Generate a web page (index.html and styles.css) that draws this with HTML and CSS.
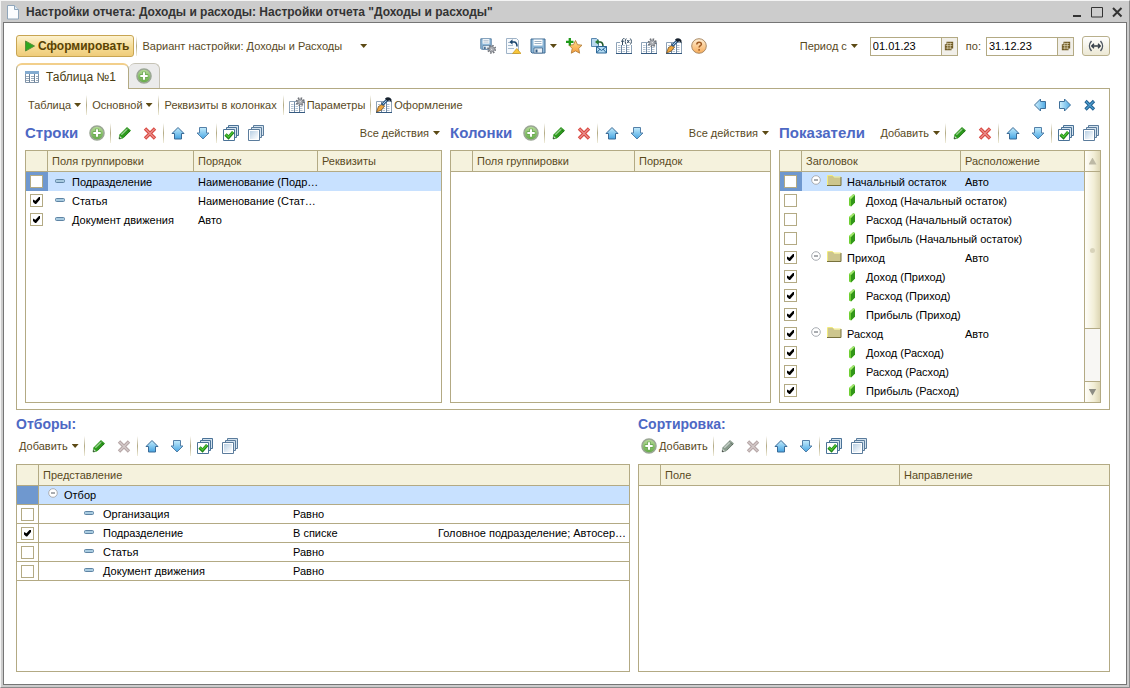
FILE: index.html
```html
<!DOCTYPE html>
<html lang="ru">
<head>
<meta charset="utf-8">
<meta name="viewport" content="width=device-width, initial-scale=1">
<title>Настройки отчета: Доходы и расходы</title>
<link rel="stylesheet" href="styles.css">
</head>
<body>
<svg class="sprite" aria-hidden="true">
  <defs>
    <linearGradient id="g-blue" x1="0" y1="0" x2="0" y2="1"><stop offset="0" stop-color="#c4ecfc"/><stop offset="1" stop-color="#45a4e2"/></linearGradient>
    <linearGradient id="g-blue-r" x1="0" y1="0" x2="1" y2="0"><stop offset="0" stop-color="#d0f0fd"/><stop offset="1" stop-color="#50aae4"/></linearGradient>
    <linearGradient id="g-green" x1="0" y1="0" x2="0" y2="1"><stop offset="0" stop-color="#b9dc9c"/><stop offset="1" stop-color="#62ab45"/></linearGradient>
    <linearGradient id="g-help" x1="0" y1="0" x2="0" y2="1"><stop offset="0" stop-color="#fff0d6"/><stop offset="1" stop-color="#f7ab58"/></linearGradient>
    <linearGradient id="g-page" x1="0" y1="0" x2="1" y2="1"><stop offset="0" stop-color="#b9d0e4"/><stop offset="1" stop-color="#fff"/></linearGradient>
    <linearGradient id="g-star" x1="0" y1="0" x2="0" y2="1"><stop offset="0" stop-color="#ffe08a"/><stop offset="1" stop-color="#f59a3c"/></linearGradient>
  </defs>
  <symbol id="i-doc" viewBox="0 0 16 16"><path d="M2.500 1.500h7l4 4v9.500h-11z" fill="#fbfdff" stroke="#8fa6bb"/><path d="M9.500 1.500v4h4" fill="#dce8f2" stroke="#8fa6bb"/></symbol>
  <symbol id="i-play" viewBox="0 0 10 12"><path d="M.500 1l9 5-9 5z" fill="#2ea820" stroke="#5a8c3c"/></symbol>
  <symbol id="i-plus" viewBox="0 0 16 16"><circle cx="8" cy="8" r="7" fill="url(#g-green)" stroke="#9aa694" stroke-width="1.600"/><path d="M8 3.800v8.400M3.800 8h8.400" stroke="#64a34c" stroke-width="3.600"/><path d="M8 4.300v7.400M4.300 8h7.400" stroke="#fff" stroke-width="2.200"/></symbol>
  <symbol id="i-pencil" viewBox="0 0 16 16"><path d="M2 14l.500-4.500 7.500-7.500 4 3.500-7.500 7.500z" fill="currentColor"/><path d="M4.300 9.700l6.200-6" stroke="#fff" stroke-opacity=".5" stroke-width="1.400"/><path d="M7 12l6-6" stroke="#000" stroke-opacity=".25"/><path d="M9 3.300l3.800 3.600" stroke="#000" stroke-opacity=".25"/><path d="M2.600 10.500l2.900 2.800-3.500.700z" fill="#e8efe4" stroke="currentColor" stroke-width=".6"/><path d="M2 14l.500-2 1.500 1.600z" fill="#333"/></symbol>
  <symbol id="i-cross" viewBox="0 0 16 16"><path d="M3 3.500l10 10M13 3.500l-10 10" stroke="currentColor" stroke-width="3.400"/><path d="M3.500 4l9 9M12.500 4l-9 9" stroke="#fff" stroke-opacity=".4" stroke-width="1.400"/></symbol>
  <symbol id="i-up" viewBox="0 0 16 16"><path d="M8 2.500l6 6h-2.500v5.500h-7V8.500H2z" fill="url(#g-blue)" stroke="#3a6a96"/></symbol>
  <symbol id="i-down" viewBox="0 0 16 16"><path d="M8 14l6-6h-2.500V2.500h-7V8H2z" fill="url(#g-blue)" stroke="#5480a8"/></symbol>
  <symbol id="i-left" viewBox="0 0 16 16"><path d="M2.500 8l6-6v2.500h5v7h-5V14z" fill="url(#g-blue-r)" stroke="#3f709a"/></symbol>
  <symbol id="i-right" viewBox="0 0 16 16"><path d="M13.500 8l-6-6v2.500h-5v7h5V14z" fill="url(#g-blue-r)" stroke="#3f709a"/></symbol>
  <symbol id="i-close" viewBox="0 0 16 16"><path d="M3.500 4l8.500 8.500M12 4l-8.500 8.500" stroke="#235f8f" stroke-width="3.200"/><path d="M4 4.500l7.500 7.500M11.500 4.500L4 12" stroke="#4c9ccd" stroke-width="1.300"/></symbol>
  <symbol id="i-stack" viewBox="0 0 16 16"><path d="M5.500.500h10v10h-10z" fill="#d3e2ee" stroke="#5b7c9c"/><path d="M3.500 2.500h10v10h-10z" fill="#d3e2ee" stroke="#5b7c9c"/><path d="M.500 4.500h11v11H.500z" fill="#fff" stroke="#5b7c9c"/><path d="M2 6h8v8H2z" fill="url(#g-page)"/></symbol>
  <symbol id="i-checkall" viewBox="0 0 16 16"><path d="M5.500.500h10v10h-10z" fill="#d3e2ee" stroke="#4a7297"/><path d="M3.500 2.500h10v10h-10z" fill="#d3e2ee" stroke="#4a7297"/><path d="M.500 4.500h11v11H.500z" fill="#fff" stroke="#4a7297"/><path d="M2.500 9.500l3 3 4.700-5.500" fill="none" stroke="#1d8217" stroke-width="3.200"/><path d="M2.800 9.500l2.700 2.500 4.400-5" fill="none" stroke="#4bc332" stroke-width="1.500"/></symbol>
  <symbol id="i-table" viewBox="0 0 16 16"><path d="M1.500 2.500h13v11h-13z" fill="#fff" stroke="#7f93a8"/><path d="M1 2h14v3H1z" fill="#83abd0"/><path d="M5.500 5v8M10.500 5v8" stroke="#6c8299"/><path d="M2 7.500h12M2 9.500h12M2 11.500h12" stroke="#9aaaba" stroke-dasharray="3 2"/></symbol>
  <symbol id="i-grid" viewBox="0 0 16 16"><path d="M.500 4.500h15v11H.500z" fill="#fff" stroke="#8ea3b8"/><path d="M5.500 5v10M10.500 5v10" stroke="#6f89a5"/><path d="M2 7.500h12M2 9.500h12M2 11.500h12M2 13.500h12" stroke="#b4c2d0" stroke-dasharray="2.500 2"/><path d="M0 15.500h16" stroke="#355a80"/></symbol>
  <symbol id="i-gear" viewBox="0 0 16 16"><circle cx="8" cy="8" r="6" fill="none" stroke="#73767c" stroke-width="3.500" stroke-dasharray="2.400 2.310"/><circle cx="8" cy="8" r="4.500" fill="#b9bcc1" stroke="#7c7f86" stroke-width="1.500"/><circle cx="8" cy="8" r="1.800" fill="#fff" stroke="#7c7f86"/></symbol>
  <symbol id="i-params" viewBox="0 0 16 16"><use href="#i-grid"/><use href="#i-gear" x="6.500" y="0" width="9.500" height="9.500"/></symbol>
  <symbol id="i-style" viewBox="0 0 16 16"><use href="#i-grid"/><path d="M.500 15l2-5.500 4-2.500 2 2-3 4z" fill="#f0a73c" stroke="#71522a" stroke-width=".8"/><path d="M6 8l6-6" stroke="#355f88" stroke-width="3"/><path d="M7 7l5-5" stroke="#a9cde8"/><path d="M9 1.500c2-1.800 5-1.800 6.500 1v3c-1.500-2.500-3-2-4.500-1.500z" fill="#17222e"/></symbol>
  <symbol id="i-fx" viewBox="0 0 16 16"><use href="#i-grid"/><path d="M4 0h12v7H4z" fill="#fff"/><path d="M8.500.700c-2-.700-2 1-2 2v4.300M5 3.200h3M10.300.500c-1.500 2-1.500 4 0 6M11.300 2l2 3M13.300 2l-2 3M14.300.500c1.500 2 1.500 4 0 6" fill="none" stroke="#334b61"/></symbol>
  <symbol id="i-disk" viewBox="0 0 16 16"><path d="M1 1h14v14H2l-1-1z" fill="#8db7d8" stroke="#3f6a92"/><path d="M3.500 1.500h9v6h-9z" fill="#fff"/><path d="M4.500 3.500h7M4.500 5.500h7" stroke="#9db2c6"/><path d="M4 10h8.500v5H4z" fill="#eaf1f7" stroke="#365f87" stroke-width=".7"/><path d="M5.500 11.500h2v3h-2z" fill="#365f87"/></symbol>
  <symbol id="i-diskgear" viewBox="0 0 16 16"><use href="#i-disk" x="0" y="0" width="12" height="12"/><use href="#i-gear" x="7" y="6.500" width="9.500" height="9.500"/></symbol>
  <symbol id="i-restore" viewBox="0 0 16 16"><path d="M1.500.500h10l2 2v13h-12z" fill="#f7fafd" stroke="#9fb3c7"/><path d="M3 4.500h3M3 7.500h5M3 10.500h6" stroke="#a7bccf"/><path d="M6 4h3.500c2 .5 2.500 2 2.500 4.500" fill="none" stroke="#17436c" stroke-width="1.500"/><path d="M7.500 1.200v5.600L4.500 4z" fill="#17436c"/><path d="M7.500 15.500l4.300-5 4.200 5z" fill="#f8c63b" stroke="#c59418" stroke-width=".7"/></symbol>
  <symbol id="i-fav" viewBox="0 0 16 16"><path d="M9.500 2.500l2 4.200 4.500.500-3.300 3.200.900 4.800-4.100-2.300-4.200 2.300.900-4.800L3 7.200l4.500-.500z" fill="url(#g-star)" stroke="#b5803c" stroke-width=".9"/><path d="M3.800 0v7.500M0 3.800h7.500" stroke="#1f9a1a" stroke-width="2.300"/></symbol>
  <symbol id="i-mail" viewBox="0 0 16 16"><path d="M.500.500h5l2 2v6h-7z" fill="#b9d8ee" stroke="#5a88b0"/><path d="M5.500 4h4c2 .5 2.500 2 2.500 4" fill="none" stroke="#235c2c" stroke-width="1.500"/><path d="M7.500 1.200v5.600L4 4z" fill="#287b32"/><path d="M5.500 8.500h10v6.500h-10z" fill="#b4dbf3" stroke="#2d6796"/><path d="M5.500 8.500l5 4 5-4M5.500 15l3.500-4M15.500 15L12 11" fill="none" stroke="#2d6796"/></symbol>
  <symbol id="i-help" viewBox="0 0 16 16"><circle cx="8" cy="8" r="7.300" fill="url(#g-help)" stroke="#aa8a66"/><path d="M5.800 6.500c0-3 4.600-3 4.600-.300 0 1.500-2.300 1.500-2.300 3.300M8.100 11v1.700" fill="none" stroke="#a05a22" stroke-width="1.500"/></symbol>
  <symbol id="i-cal" viewBox="0 0 12 12"><path d="M3 1h8v8H9v2H1V4h2z" fill="#6f5a24"/><path d="M4 3h6M2 5.500h8M2 8.500h7M4.500 2v8M7.500 2v8" stroke="#e8dfc0" stroke-width=".8"/></symbol>
  <symbol id="i-range" viewBox="0 0 16 12"><path d="M3.500 1C.800 4 .800 8 3.500 11M12.500 1c2.700 3 2.700 7 0 10" fill="none" stroke="#4c5560" stroke-width="1.400"/><path d="M4 6h8M6 3.800L3.700 6 6 8.200M10 3.800L12.300 6 10 8.200" fill="none" stroke="#333c46" stroke-width="1.300"/></symbol>
  <symbol id="i-dash" viewBox="0 0 12 16"><rect x="1.500" y="5.500" width="9" height="3" rx="1" fill="#a9cbe0" stroke="#5e84a4"/></symbol>
  <symbol id="i-minus" viewBox="0 0 10 16"><circle cx="5" cy="6" r="4.300" fill="#fff" stroke="#a9adb3"/><path d="M3 6h4" stroke="#555b63"/></symbol>
  <symbol id="i-folder" viewBox="0 0 16 16"><path d="M1 2h6l1.500 1.500H15V11H1z" fill="#cdc68e"/><path d="M1.500 11V1.500h5L8 3h7" fill="none" stroke="#f2eb7c"/><path d="M15 3v8.500H1" fill="none" stroke="#77713c"/></symbol>
  <symbol id="i-leaf" viewBox="0 0 8 16"><path d="M1 5l4-3.500 2 .500v7.500l-4 4-2-1z" fill="#6fd032"/><path d="M5 1.500l2 .500v7.500l-4 4V6z" fill="#33961a"/><path d="M1 5l4-3.500 2 .500-4 4z" fill="#a5e96f"/></symbol>
</svg>

<div class="window">
  <header class="titlebar">
    <svg class="icon"><use href="#i-doc"/></svg>
    <h1 class="titlebar-text">Настройки отчета: Доходы и расходы: Настройки отчета "Доходы и расходы"</h1>
    <div class="window-controls">
      <button class="bare" aria-label="Свернуть"><svg class="wc" viewBox="0 0 12 12"><path d="M2 10h8" stroke="#333" stroke-width="2"/></svg></button>
      <button class="bare" aria-label="Развернуть"><svg class="wc" viewBox="0 0 12 12"><path d="M.500 1.500h11v9.500H.500z" fill="none" stroke="#333"/></svg></button>
      <button class="bare" aria-label="Закрыть"><svg class="wc" viewBox="0 0 12 12"><path d="M2 2l8.500 8.500M10.500 2L2 10.500" stroke="#333" stroke-width="2"/></svg></button>
    </div>
  </header>

  <main class="content">
    <div class="mainbar">
      <div class="mainbar-left">
        <button class="run"><svg class="play"><use href="#i-play"/></svg>Сформировать</button>
        <span class="sep"></span>
        <button class="bare variant"><span>Вариант настройки: Доходы и Расходы</span><span class="caret"></span></button>
      </div>
      <div class="icons">
        <button class="bare" aria-label="Настройки сохранения"><svg class="icon"><use href="#i-diskgear"/></svg></button>
        <button class="bare" aria-label="Восстановить настройки"><svg class="icon"><use href="#i-restore"/></svg></button>
        <button class="bare menu" aria-label="Сохранить"><svg class="icon"><use href="#i-disk"/></svg><span class="caret"></span></button>
        <button class="bare" aria-label="В избранное"><svg class="icon"><use href="#i-fav"/></svg></button>
        <button class="bare" aria-label="Отправить"><svg class="icon"><use href="#i-mail"/></svg></button>
        <button class="bare" aria-label="Формулы"><svg class="icon"><use href="#i-fx"/></svg></button>
        <button class="bare" aria-label="Параметры таблицы"><svg class="icon"><use href="#i-params"/></svg></button>
        <button class="bare" aria-label="Оформление таблицы"><svg class="icon"><use href="#i-style"/></svg></button>
        <button class="bare" aria-label="Справка"><svg class="icon"><use href="#i-help"/></svg></button>
      </div>
      <div class="period">
        <button class="bare menu">Период с<span class="caret"></span></button>
        <div class="date"><input type="text" value="01.01.23" aria-label="Период с"><button aria-label="Выбрать дату начала"><svg class="cal"><use href="#i-cal"/></svg></button></div>
        <label for="date-to">по:</label>
        <div class="date"><input type="text" id="date-to" value="31.12.23"><button aria-label="Выбрать дату окончания"><svg class="cal"><use href="#i-cal"/></svg></button></div>
        <button class="range" aria-label="Выбрать период"><svg><use href="#i-range"/></svg></button>
      </div>
    </div>

    <div class="tabs">
      <button class="tab tab-active"><svg class="icon"><use href="#i-table"/></svg>Таблица №1</button>
      <button class="tab tab-add" aria-label="Добавить таблицу"><svg class="icon"><use href="#i-plus"/></svg></button>
    </div>

    <section class="panel">
      <div class="commands">
        <button class="bare menu">Таблица<span class="caret"></span></button>
        <span class="sep"></span>
        <button class="bare menu">Основной<span class="caret"></span></button>
        <span class="sep"></span>
        <button class="bare wide">Реквизиты в колонках</button>
        <span class="sep"></span>
        <button class="bare labelled"><svg class="icon"><use href="#i-params"/></svg>Параметры</button>
        <span class="sep"></span>
        <button class="bare labelled"><svg class="icon"><use href="#i-style"/></svg>Оформление</button>
        <div class="icons push">
          <button class="bare" aria-label="Влево"><svg class="icon"><use href="#i-left"/></svg></button>
          <button class="bare" aria-label="Вправо"><svg class="icon"><use href="#i-right"/></svg></button>
          <button class="bare" aria-label="Удалить таблицу"><svg class="icon"><use href="#i-close"/></svg></button>
        </div>
      </div>

      <div class="columns">
        <section class="block">
          <div class="block-head">
            <h2>Строки</h2>
            <div class="icons">
              <button class="bare" aria-label="Добавить"><svg class="icon"><use href="#i-plus"/></svg></button>
              <span class="sep"></span>
              <button class="bare" aria-label="Изменить"><svg class="icon green"><use href="#i-pencil"/></svg></button>
              <button class="bare" aria-label="Удалить"><svg class="icon red"><use href="#i-cross"/></svg></button>
              <span class="sep"></span>
              <button class="bare" aria-label="Вверх"><svg class="icon"><use href="#i-up"/></svg></button>
              <button class="bare" aria-label="Вниз"><svg class="icon"><use href="#i-down"/></svg></button>
              <span class="sep"></span>
              <button class="bare" aria-label="Отметить все"><svg class="icon"><use href="#i-checkall"/></svg></button>
              <button class="bare" aria-label="Снять отметки"><svg class="icon"><use href="#i-stack"/></svg></button>
            </div>
            <button class="bare menu push">Все действия<span class="caret"></span></button>
          </div>
          <div class="grid">
            <table>
              <colgroup><col class="c-check"><col class="c-rows-field"><col class="c-rows-order"><col></colgroup>
              <thead><tr><th></th><th>Поля группировки</th><th>Порядок</th><th>Реквизиты</th></tr></thead>
              <tbody>
                <tr class="selected"><td><input type="checkbox" aria-label="Подразделение"></td><td><div class="node field"><svg class="dash"><use href="#i-dash"/></svg>Подразделение</div></td><td>Наименование (Подр…</td><td></td></tr>
                <tr><td><input type="checkbox" checked aria-label="Статья"></td><td><div class="node field"><svg class="dash"><use href="#i-dash"/></svg>Статья</div></td><td>Наименование (Стат…</td><td></td></tr>
                <tr><td><input type="checkbox" checked aria-label="Документ движения"></td><td><div class="node field"><svg class="dash"><use href="#i-dash"/></svg>Документ движения</div></td><td>Авто</td><td></td></tr>
              </tbody>
            </table>
          </div>
        </section>

        <section class="block">
          <div class="block-head">
            <h2>Колонки</h2>
            <div class="icons">
              <button class="bare" aria-label="Добавить"><svg class="icon"><use href="#i-plus"/></svg></button>
              <span class="sep"></span>
              <button class="bare" aria-label="Изменить"><svg class="icon green"><use href="#i-pencil"/></svg></button>
              <button class="bare" aria-label="Удалить"><svg class="icon red"><use href="#i-cross"/></svg></button>
              <span class="sep"></span>
              <button class="bare" aria-label="Вверх"><svg class="icon"><use href="#i-up"/></svg></button>
              <button class="bare" aria-label="Вниз"><svg class="icon"><use href="#i-down"/></svg></button>
            </div>
            <button class="bare menu push">Все действия<span class="caret"></span></button>
          </div>
          <div class="grid">
            <table>
              <colgroup><col class="c-check"><col class="c-cols-field"><col></colgroup>
              <thead><tr><th></th><th>Поля группировки</th><th>Порядок</th></tr></thead>
            </table>
          </div>
        </section>

        <section class="block">
          <div class="block-head">
            <h2>Показатели</h2>
            <div class="icons push">
              <button class="bare menu">Добавить<span class="caret"></span></button>
              <span class="sep"></span>
              <button class="bare" aria-label="Изменить"><svg class="icon green"><use href="#i-pencil"/></svg></button>
              <button class="bare" aria-label="Удалить"><svg class="icon red"><use href="#i-cross"/></svg></button>
              <span class="sep"></span>
              <button class="bare" aria-label="Вверх"><svg class="icon"><use href="#i-up"/></svg></button>
              <button class="bare" aria-label="Вниз"><svg class="icon"><use href="#i-down"/></svg></button>
              <span class="sep"></span>
              <button class="bare" aria-label="Отметить все"><svg class="icon"><use href="#i-checkall"/></svg></button>
              <button class="bare" aria-label="Снять отметки"><svg class="icon"><use href="#i-stack"/></svg></button>
            </div>
          </div>
          <div class="grid grid-scroll">
            <table>
              <colgroup><col class="c-check"><col class="c-ind-title"><col></colgroup>
              <thead><tr><th></th><th>Заголовок</th><th>Расположение</th></tr></thead>
              <tbody>
                <tr class="selected"><td><input type="checkbox" aria-label="Начальный остаток"></td><td><div class="node group"><svg class="minus"><use href="#i-minus"/></svg><svg class="icon"><use href="#i-folder"/></svg>Начальный остаток</div></td><td>Авто</td></tr>
                <tr><td><input type="checkbox" aria-label="Доход (Начальный остаток)"></td><td colspan="2"><div class="node leaf"><svg class="cube"><use href="#i-leaf"/></svg>Доход (Начальный остаток)</div></td></tr>
                <tr><td><input type="checkbox" aria-label="Расход (Начальный остаток)"></td><td colspan="2"><div class="node leaf"><svg class="cube"><use href="#i-leaf"/></svg>Расход (Начальный остаток)</div></td></tr>
                <tr><td><input type="checkbox" aria-label="Прибыль (Начальный остаток)"></td><td colspan="2"><div class="node leaf"><svg class="cube"><use href="#i-leaf"/></svg>Прибыль (Начальный остаток)</div></td></tr>
                <tr><td><input type="checkbox" checked aria-label="Приход"></td><td><div class="node group"><svg class="minus"><use href="#i-minus"/></svg><svg class="icon"><use href="#i-folder"/></svg>Приход</div></td><td>Авто</td></tr>
                <tr><td><input type="checkbox" checked aria-label="Доход (Приход)"></td><td colspan="2"><div class="node leaf"><svg class="cube"><use href="#i-leaf"/></svg>Доход (Приход)</div></td></tr>
                <tr><td><input type="checkbox" checked aria-label="Расход (Приход)"></td><td colspan="2"><div class="node leaf"><svg class="cube"><use href="#i-leaf"/></svg>Расход (Приход)</div></td></tr>
                <tr><td><input type="checkbox" checked aria-label="Прибыль (Приход)"></td><td colspan="2"><div class="node leaf"><svg class="cube"><use href="#i-leaf"/></svg>Прибыль (Приход)</div></td></tr>
                <tr><td><input type="checkbox" checked aria-label="Расход"></td><td><div class="node group"><svg class="minus"><use href="#i-minus"/></svg><svg class="icon"><use href="#i-folder"/></svg>Расход</div></td><td>Авто</td></tr>
                <tr><td><input type="checkbox" checked aria-label="Доход (Расход)"></td><td colspan="2"><div class="node leaf"><svg class="cube"><use href="#i-leaf"/></svg>Доход (Расход)</div></td></tr>
                <tr><td><input type="checkbox" checked aria-label="Расход (Расход)"></td><td colspan="2"><div class="node leaf"><svg class="cube"><use href="#i-leaf"/></svg>Расход (Расход)</div></td></tr>
                <tr><td><input type="checkbox" checked aria-label="Прибыль (Расход)"></td><td colspan="2"><div class="node leaf"><svg class="cube"><use href="#i-leaf"/></svg>Прибыль (Расход)</div></td></tr>
              </tbody>
            </table>
            <div class="scrollbar">
              <button class="scroll-btn scroll-up" aria-label="Прокрутить вверх"></button>
              <div class="scroll-thumb"></div>
              <div class="scroll-track"></div>
              <button class="scroll-btn scroll-down" aria-label="Прокрутить вниз"></button>
            </div>
          </div>
        </section>
      </div>
    </section>

    <div class="lower">
      <section class="block">
        <h2>Отборы:</h2>
        <div class="icons lower-bar">
          <button class="bare menu">Добавить<span class="caret"></span></button>
          <span class="sep"></span>
          <button class="bare" aria-label="Изменить"><svg class="icon green"><use href="#i-pencil"/></svg></button>
          <button class="bare" aria-label="Удалить" disabled><svg class="icon off-red"><use href="#i-cross"/></svg></button>
          <span class="sep"></span>
          <button class="bare" aria-label="Вверх"><svg class="icon"><use href="#i-up"/></svg></button>
          <button class="bare" aria-label="Вниз"><svg class="icon"><use href="#i-down"/></svg></button>
          <span class="sep"></span>
          <button class="bare" aria-label="Отметить все"><svg class="icon"><use href="#i-checkall"/></svg></button>
          <button class="bare" aria-label="Снять отметки"><svg class="icon"><use href="#i-stack"/></svg></button>
        </div>
        <div class="grid">
          <table class="lined">
            <colgroup><col class="c-check"><col class="c-flt-name"><col class="c-flt-cond"><col></colgroup>
            <thead><tr><th></th><th colspan="3">Представление</th></tr></thead>
            <tbody>
              <tr class="selected"><td></td><td colspan="3"><div class="node root"><svg class="minus"><use href="#i-minus"/></svg>Отбор</div></td></tr>
              <tr><td><input type="checkbox" aria-label="Организация"></td><td><div class="node filter"><svg class="dash"><use href="#i-dash"/></svg>Организация</div></td><td>Равно</td><td></td></tr>
              <tr><td><input type="checkbox" checked aria-label="Подразделение"></td><td><div class="node filter"><svg class="dash"><use href="#i-dash"/></svg>Подразделение</div></td><td>В списке</td><td>Головное подразделение; Автосер…</td></tr>
              <tr><td><input type="checkbox" aria-label="Статья"></td><td><div class="node filter"><svg class="dash"><use href="#i-dash"/></svg>Статья</div></td><td>Равно</td><td></td></tr>
              <tr><td><input type="checkbox" aria-label="Документ движения"></td><td><div class="node filter"><svg class="dash"><use href="#i-dash"/></svg>Документ движения</div></td><td>Равно</td><td></td></tr>
            </tbody>
          </table>
        </div>
      </section>

      <section class="block">
        <h2>Сортировка:</h2>
        <div class="icons lower-bar">
          <button class="bare labelled"><svg class="icon"><use href="#i-plus"/></svg>Добавить</button>
          <span class="sep"></span>
          <button class="bare" aria-label="Изменить" disabled><svg class="icon off-green"><use href="#i-pencil"/></svg></button>
          <button class="bare" aria-label="Удалить" disabled><svg class="icon off-red"><use href="#i-cross"/></svg></button>
          <span class="sep"></span>
          <button class="bare" aria-label="Вверх"><svg class="icon"><use href="#i-up"/></svg></button>
          <button class="bare" aria-label="Вниз"><svg class="icon"><use href="#i-down"/></svg></button>
          <span class="sep"></span>
          <button class="bare" aria-label="Отметить все"><svg class="icon"><use href="#i-checkall"/></svg></button>
          <button class="bare" aria-label="Снять отметки"><svg class="icon"><use href="#i-stack"/></svg></button>
        </div>
        <div class="grid">
          <table>
            <colgroup><col class="c-check"><col class="c-sort-field"><col></colgroup>
            <thead><tr><th></th><th>Поле</th><th>Направление</th></tr></thead>
          </table>
        </div>
      </section>
    </div>
  </main>
</div>
</body>
</html>
```

FILE: styles.css
```css
:root {
  --line: #b3aa84;
  --head: #f5f2dd;
  --ink: #594a1e;
  --frame: #cccccc;
  --frame-dark: #757575;
  --select: #c8e1ff;
}

* { box-sizing: border-box; }

body {
  margin: 0;
  font: 11px/16px "Liberation Sans", Arial, sans-serif;
  color: var(--ink);
  background: #fff;
}

.sprite { position: absolute; width: 0; height: 0; }
svg { display: block; flex: none; }
.icon { width: 16px; height: 16px; }

button, input { font: inherit; color: inherit; margin: 0; }

.bare {
  display: flex;
  align-items: center;
  padding: 0;
  border: 0;
  background: none;
  white-space: nowrap;
}

.window {
  display: flex;
  flex-direction: column;
  min-height: 100vh;
  padding: 0 2px 2px;
  background: var(--frame);
  border: solid #8c8c8c;
  border-width: 0 1px 1px 0;
  border-left: 1px solid #f4f4f4;
  border-top: 1px solid #f4f4f4;
}

/* Title bar */
.titlebar {
  display: flex;
  align-items: center;
  gap: 5px;
  height: 21px;
  padding: 0 4px 0 2px;
  color: #333;
}
.titlebar-text {
  flex: 1;
  min-width: 0;
  margin: 0;
  font: bold 12px/16px "Liberation Sans", Arial, sans-serif;
  overflow: hidden;
  white-space: nowrap;
}
.window-controls { display: flex; gap: 8px; }
.wc { width: 12px; height: 12px; }

.content {
  flex: 1;
  display: flex;
  flex-direction: column;
  padding: 12px 16px 12px 12px;
  background: #fff;
  border: 1px solid var(--frame-dark);
}

/* Shared pieces */
.sep {
  width: 1px;
  height: 20px;
  background: linear-gradient(#fff, #b3aa84 50%, #f1eedd);
}
.caret {
  width: 7px;
  height: 4px;
  background: #5c4a15;
  clip-path: polygon(0 0, 100% 0, 50% 100%);
}
.menu { gap: 4px; }
.icons { display: flex; align-items: center; gap: 9px; }
.icons .sep { margin: 0 -3px 0 -4px; }
.labelled { gap: 2px; }
.push { margin-left: auto; }
.green { color: #2c9b1c; }
.red { color: #d9433c; }
.off-green { color: #8a9c8e; }
.off-red { color: #b5a5a5; }

h2 {
  margin: 0;
  font: bold 14px/16px "Liberation Sans", Arial, sans-serif;
  color: #4d68c4;
}

/* Main command bar */
.mainbar {
  display: flex;
  align-items: center;
  justify-content: space-between;
  height: 22px;
}
.mainbar-left { display: flex; align-items: center; gap: 2px; padding-right: 20px; }
.run {
  display: flex;
  align-items: center;
  gap: 3px;
  height: 22px;
  padding: 0 4px 0 8px;
  font: bold 12px/16px "Liberation Sans", Arial, sans-serif;
  color: #5a4303;
  border: 1px solid #c8a552;
  border-radius: 3px;
  background: linear-gradient(#fdf2cf, #f6dd98 50%, #efcc7a);
}
.play { width: 10px; height: 12px; }
.variant { gap: 18px; padding-left: 3px; }

.period { display: flex; align-items: center; }
.date {
  display: flex;
  width: 88px;
  height: 19px;
  margin: 0 8px 0 12px;
  border: 1px solid var(--line);
}
label + .date { margin-left: 5px; }
.date input {
  flex: 1;
  min-width: 0;
  padding: 0 2px;
  border: 0;
  color: #000;
  background: #fff;
}
.date button {
  display: grid;
  place-items: center;
  width: 16px;
  padding: 0;
  border: 0;
  border-left: 1px solid var(--line);
  background: #f1efe9;
}
.cal { width: 10px; height: 10px; }
.range {
  display: grid;
  place-items: center;
  width: 28px;
  height: 20px;
  padding: 0;
  border: 1px solid #b9b08c;
  border-radius: 3px;
  background: linear-gradient(#fff, #ece8d4);
}
.range svg { width: 16px; height: 12px; }

/* Tabs */
.tabs { display: flex; margin-top: 6px; }
.tab {
  display: flex;
  align-items: center;
  height: 25px;
  border: 1px solid var(--line);
  border-bottom: 0;
  border-radius: 6px 6px 0 0;
}
.tab-active {
  position: relative;
  height: 26px;
  margin-bottom: -1px;
  gap: 6px;
  padding: 0 12px 0 7px;
  font-size: 12px;
  color: #4a3c10;
  background: #fff;
  border-top: 2px solid #f2cf8b;
}
.tab-add { padding: 0 7px; border-color: #c6c3b6; border-left: 0; background: #ebebeb; }

/* Upper panel */
.panel { padding: 5px 8px 6px; border: 1px solid var(--line); }
.commands { display: flex; align-items: center; gap: 5px; height: 22px; padding: 0 3px; }
.commands .menu { gap: 3px; }
.commands .wide { padding: 0 1px; }
.columns {
  display: grid;
  grid-template-columns: minmax(0, 417fr) minmax(0, 321fr) minmax(0, 322fr);
  gap: 8px;
  margin-top: 6px;
}
.block { display: flex; flex-direction: column; min-width: 0; }
.block-head { display: flex; align-items: center; gap: 11px; height: 22px; margin-bottom: 6px; }
.block-head h2 { font-size: 15px; }
.block-head > .push { padding-right: 2px; }

/* Tables */
.grid { flex: 1; border: 1px solid var(--line); background: #fff; }
.grid-scroll { display: flex; align-items: flex-start; }
table { width: 100%; border-collapse: separate; border-spacing: 0; table-layout: fixed; color: #000; }
th, td { padding: 0 0 0 4px; font-weight: normal; text-align: left; overflow: hidden; white-space: nowrap; }
th {
  height: 21px;
  color: var(--ink);
  background: var(--head);
  border-bottom: 1px solid var(--line);
  border-right: 1px solid var(--line);
}
th:last-child { border-right: 0; }
td { height: 19px; line-height: 18px; }
.selected td { background: var(--select); }
.selected td:first-child { background: #6f98cf; }
.lined td { border-bottom: 1px solid var(--line); }
.lined td:first-child { border-right: 1px solid var(--line); }

.c-check { width: 22px; }
.c-rows-field { width: 146px; }
.c-rows-order { width: 124px; }
.c-cols-field { width: 162px; }
.c-ind-title { width: 159px; }
.c-flt-name { width: 250px; }
.c-flt-cond { width: 145px; }
.c-sort-field { width: 239px; }

.node { display: flex; align-items: center; height: 18px; }
.field { padding-left: 2px; gap: 6px; }
.group { padding-left: 5px; gap: 5px; }
.leaf { padding-left: 42px; gap: 10px; }
.root { padding-left: 5px; gap: 6px; }
.filter { padding-left: 40px; gap: 8px; }
.dash { width: 12px; height: 16px; }
.minus { width: 10px; height: 16px; }
.cube { width: 8px; height: 16px; }

input[type="checkbox"] {
  appearance: none;
  display: block;
  width: 13px;
  height: 13px;
  border: 1px solid var(--line);
  background: #fff;
}
input[type="checkbox"]:checked::before {
  content: "";
  display: block;
  width: 7px;
  height: 7px;
  margin: 2px;
  background: #000;
  clip-path: polygon(0 35%, 35% 55%, 85% 0, 100% 0, 100% 35%, 45% 100%, 30% 100%, 0 70%);
}

/* Scroll bar */
.scrollbar {
  display: flex;
  flex-direction: column;
  align-self: stretch;
  flex: none;
  width: 16px;
  min-height: 251px;
  border-left: 1px solid var(--line);
  background: #f8f7f4;
}
.scroll-btn {
  display: grid;
  place-items: center;
  height: 21px;
  padding: 0;
  border: 0;
  background: linear-gradient(90deg, #fffefa, #f2eed6 60%, #ddd6b4);
}
.scroll-btn::before { content: ""; width: 8px; height: 7px; background: #8d8d84; }
.scroll-up { border-bottom: 1px solid var(--line); }
.scroll-up::before { background: #bdb9a5; clip-path: polygon(50% 0, 100% 100%, 0 100%); }
.scroll-down { border-top: 1px solid var(--line); }
.scroll-down::before { clip-path: polygon(0 0, 100% 0, 50% 100%); }
.scroll-thumb {
  flex: 3 0 0;
  display: grid;
  place-items: center;
  border-bottom: 1px solid var(--line);
  background: linear-gradient(90deg, #fffefa, #f2eed6 60%, #ddd6b4);
}
.scroll-thumb::before { content: ""; width: 5px; height: 5px; border-radius: 50%; background: #d8d3ba; }
.scroll-track { flex: 1 0 0; }

/* Lower part */
.lower {
  flex: 1;
  display: grid;
  grid-template-columns: minmax(0, 614fr) minmax(0, 472fr);
  gap: 8px;
  margin-top: 6px;
}
.lower-bar { height: 22px; margin: 3px 0 7px; padding-left: 3px; }
```
